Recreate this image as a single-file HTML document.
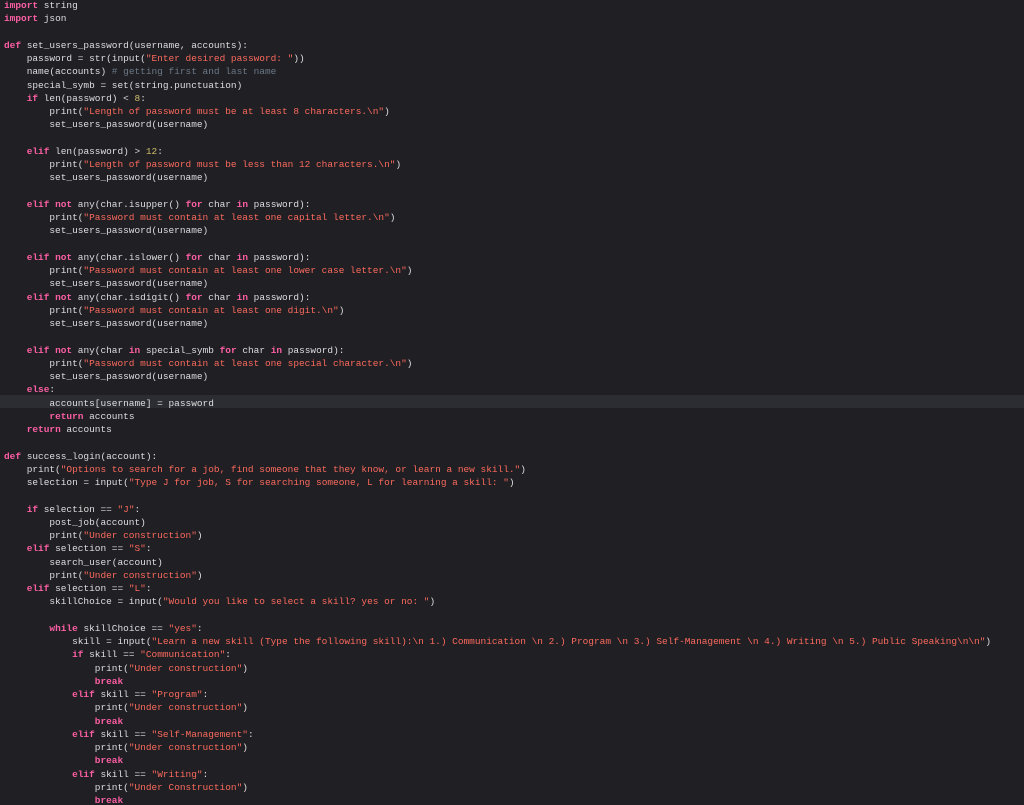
<!DOCTYPE html>
<html><head><meta charset="utf-8"><style>
html,body{margin:0;padding:0;background:#1f1f24;width:1024px;height:805px;overflow:hidden}
pre{margin:0;padding:0 0 0 4px;position:relative;top:-0.8px;font-family:"Liberation Mono",monospace;font-size:9.46px;line-height:13.25px;color:#dfdfe0}
.k{color:#fc5fa3;font-weight:bold}
.s{color:#fc6a5d}
.n{color:#d0bf69}
.c{color:#6c7986}
.hl{position:absolute;left:0;top:395px;width:1024px;height:13.25px;background:#2c2d33}
</style></head><body>
<div class="hl"></div>
<pre><span class="k">import</span> string
<span class="k">import</span> json

<span class="k">def</span> set_users_password(username, accounts):
    password = str(input(<span class="s">"Enter desired password: "</span>))
    name(accounts) <span class="c"># getting first and last name</span>
    special_symb = set(string.punctuation)
    <span class="k">if</span> len(password) &lt; <span class="n">8</span>:
        print(<span class="s">"Length of password must be at least 8 characters.\n"</span>)
        set_users_password(username)

    <span class="k">elif</span> len(password) &gt; <span class="n">12</span>:
        print(<span class="s">"Length of password must be less than 12 characters.\n"</span>)
        set_users_password(username)

    <span class="k">elif not</span> any(char.isupper() <span class="k">for</span> char <span class="k">in</span> password):
        print(<span class="s">"Password must contain at least one capital letter.\n"</span>)
        set_users_password(username)

    <span class="k">elif not</span> any(char.islower() <span class="k">for</span> char <span class="k">in</span> password):
        print(<span class="s">"Password must contain at least one lower case letter.\n"</span>)
        set_users_password(username)
    <span class="k">elif not</span> any(char.isdigit() <span class="k">for</span> char <span class="k">in</span> password):
        print(<span class="s">"Password must contain at least one digit.\n"</span>)
        set_users_password(username)

    <span class="k">elif not</span> any(char <span class="k">in</span> special_symb <span class="k">for</span> char <span class="k">in</span> password):
        print(<span class="s">"Password must contain at least one special character.\n"</span>)
        set_users_password(username)
    <span class="k">else</span>:
        accounts[username] = password
        <span class="k">return</span> accounts
    <span class="k">return</span> accounts

<span class="k">def</span> success_login(account):
    print(<span class="s">"Options to search for a job, find someone that they know, or learn a new skill."</span>)
    selection = input(<span class="s">"Type J for job, S for searching someone, L for learning a skill: "</span>)

    <span class="k">if</span> selection == <span class="s">"J"</span>:
        post_job(account)
        print(<span class="s">"Under construction"</span>)
    <span class="k">elif</span> selection == <span class="s">"S"</span>:
        search_user(account)
        print(<span class="s">"Under construction"</span>)
    <span class="k">elif</span> selection == <span class="s">"L"</span>:
        skillChoice = input(<span class="s">"Would you like to select a skill? yes or no: "</span>)

        <span class="k">while</span> skillChoice == <span class="s">"yes"</span>:
            skill = input(<span class="s">"Learn a new skill (Type the following skill):\n 1.) Communication \n 2.) Program \n 3.) Self-Management \n 4.) Writing \n 5.) Public Speaking\n\n"</span>)
            <span class="k">if</span> skill == <span class="s">"Communication"</span>:
                print(<span class="s">"Under construction"</span>)
                <span class="k">break</span>
            <span class="k">elif</span> skill == <span class="s">"Program"</span>:
                print(<span class="s">"Under construction"</span>)
                <span class="k">break</span>
            <span class="k">elif</span> skill == <span class="s">"Self-Management"</span>:
                print(<span class="s">"Under construction"</span>)
                <span class="k">break</span>
            <span class="k">elif</span> skill == <span class="s">"Writing"</span>:
                print(<span class="s">"Under Construction"</span>)
                <span class="k">break</span>
</pre>
</body></html>
